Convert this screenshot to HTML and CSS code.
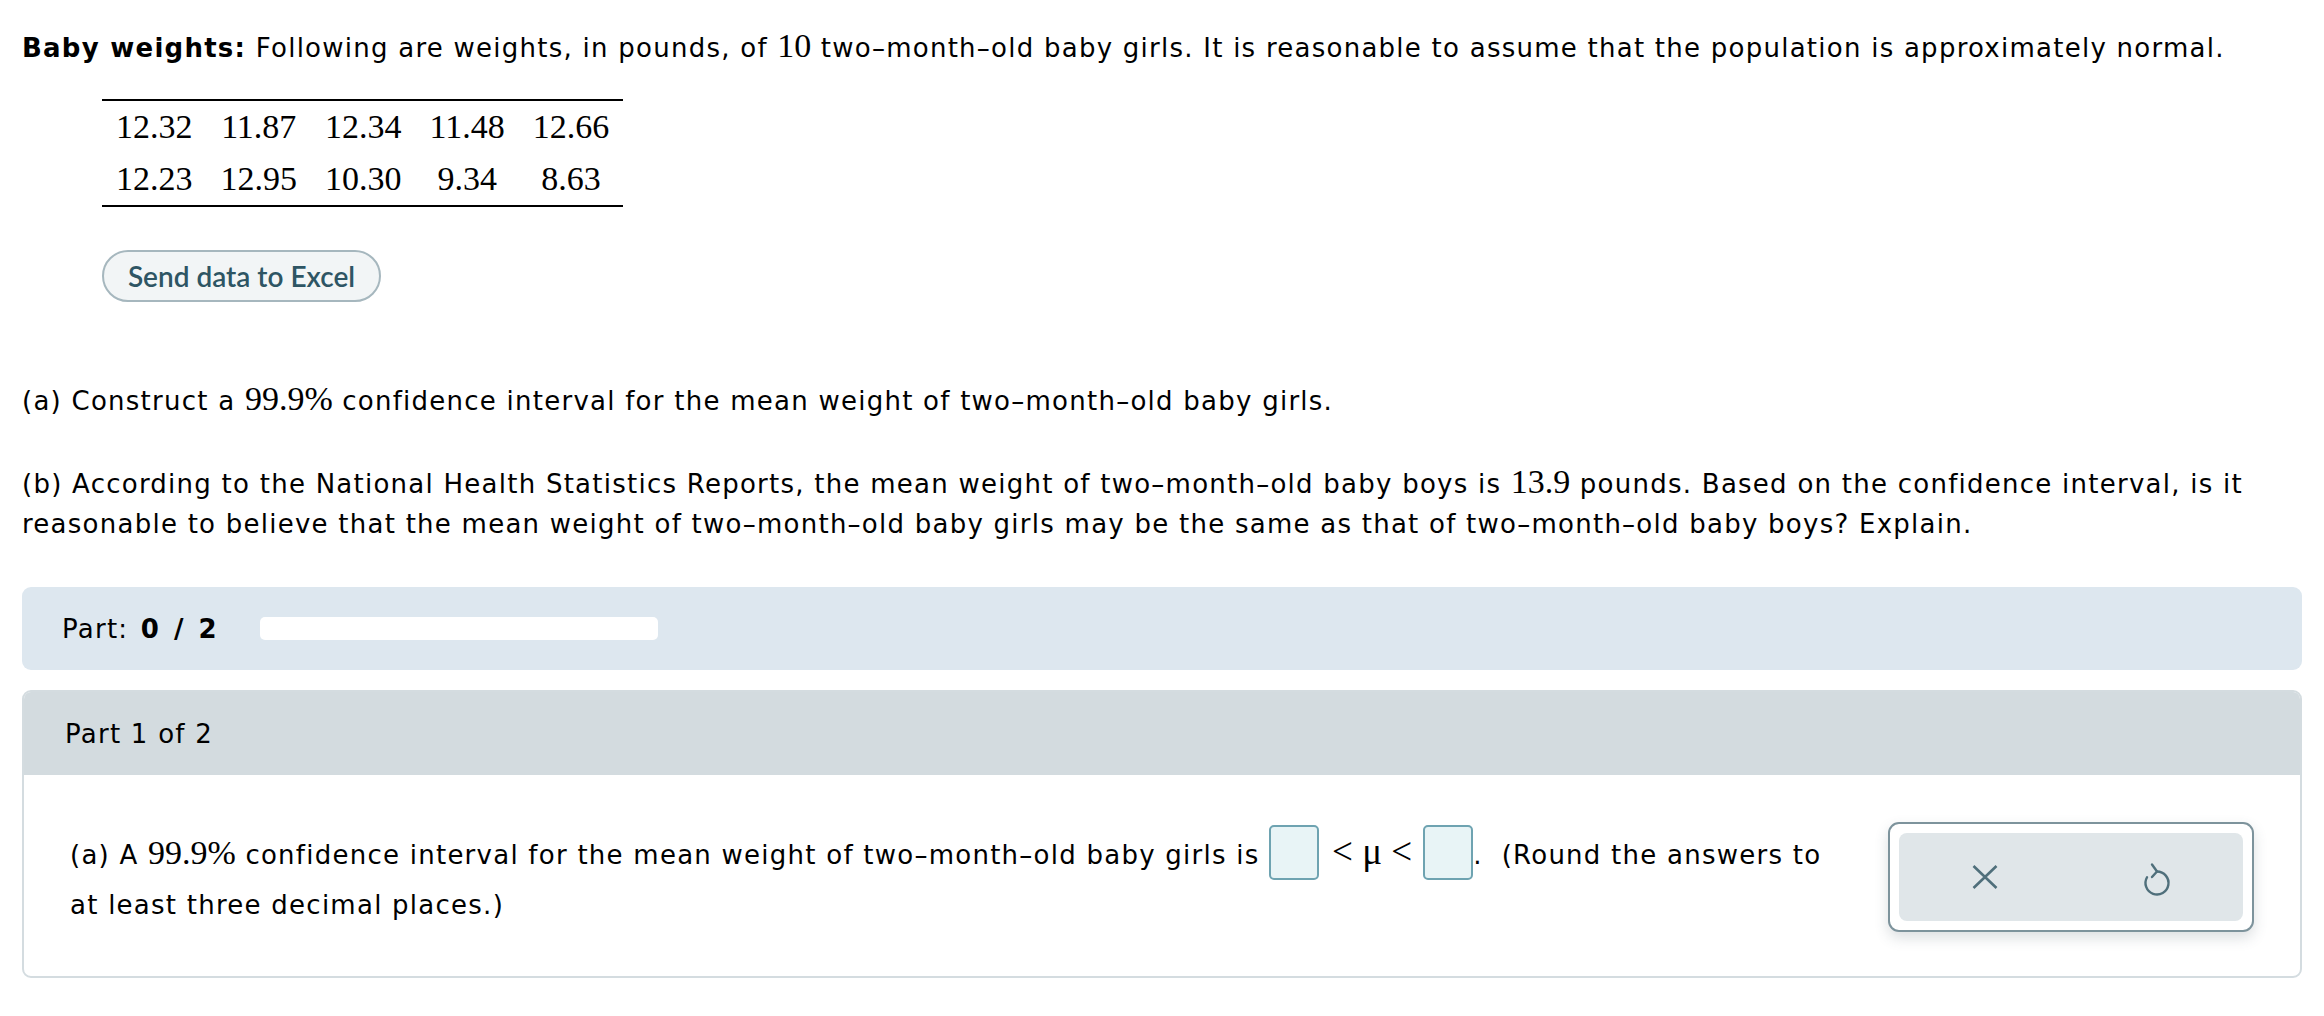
FILE: index.html
```html
<!DOCTYPE html>
<html lang="en">
<head>
<meta charset="utf-8">
<title>Baby weights</title>
<link rel="stylesheet" href="styles.css">
</head>
<body>
<main class="page">
  <p class="intro"><b>Baby weights:</b> Following are weights, in pounds, of <span class="m">10</span> two–month–old baby girls. It is reasonable to assume that the population is approximately normal.</p>

  <table class="data">
    <tr><td>12.32</td><td>11.87</td><td>12.34</td><td>11.48</td><td>12.66</td></tr>
    <tr><td>12.23</td><td>12.95</td><td>10.30</td><td>9.34</td><td>8.63</td></tr>
  </table>

  <button class="excel" type="button">Send data to Excel</button>

  <p class="qa">(a) Construct a <span class="m">99.9%</span> confidence interval for the mean weight of two–month–old baby girls.</p>

  <p class="qb">(b) According to the National Health Statistics Reports, the mean weight of two–month–old baby boys is <span class="m">13.9</span> pounds. Based on the confidence interval, is it reasonable to believe that the mean weight of two–month–old baby girls may be the same as that of two–month–old baby boys? Explain.</p>

  <div class="progress">
    <span class="progress-label">Part: <b>0 / 2</b></span>
    <div class="progress-bar"></div>
  </div>

  <section class="card">
    <div class="card-head">Part 1 of 2</div>
    <div class="card-body">
      <p class="answer">(a) A <span class="m">99.9%</span> confidence interval for the mean weight of two–month–old baby girls is <span class="box"></span><span class="m rel">&lt; μ &lt;</span><span class="box"></span>.&nbsp; (Round the answers to at least three decimal places.)</p>
      <div class="tools">
        <div class="tools-inner">
          <button class="tool" type="button" aria-label="Clear">
            <svg width="28" height="28" viewBox="0 0 28 28"><path d="M2.5 3 L25.5 25 M25.5 3 L2.5 25" stroke="#4f6f7b" stroke-width="2.6" fill="none"/></svg>
          </button>
          <button class="tool" type="button" aria-label="Undo">
            <svg width="30" height="40" viewBox="0 0 30 40"><path d="M15 14.5 A11.5 11.5 0 1 1 5.04 20.25" stroke="#4f6f7b" stroke-width="2.4" fill="none" stroke-linecap="round"/><path d="M10 7.5 L15 14.5 L10 20" stroke="#4f6f7b" stroke-width="2.4" fill="none" stroke-linecap="round" stroke-linejoin="round"/></svg>
          </button>
        </div>
      </div>
    </div>
  </section>
</main>
</body>
</html>
```

FILE: styles.css
```css
html, body {
  margin: 0;
  padding: 0;
  background: #ffffff;
}

.page {
  padding: 28px 22px 30px 22px;
  font-family: "DejaVu Sans", Verdana, sans-serif;
  font-size: 26px;
  letter-spacing: 1.25px;
  line-height: 40px;
  color: #000;
}

p {
  margin: 0;
}

.m {
  font-family: "Liberation Serif", "Times New Roman", serif;
  font-size: 34px;
  letter-spacing: 0;
  line-height: 1;
}

.m.rel {
  font-size: 37px;
  margin: 0 11px 0 13px;
}

.intro b {
  font-weight: 700;
}

.data {
  margin: 31px 0 0 80px;
  border-collapse: collapse;
  border-top: 2px solid #000;
  border-bottom: 2px solid #000;
  font-family: "Liberation Serif", "Times New Roman", serif;
  font-size: 34px;
  letter-spacing: 0;
}

.data td {
  height: 52px;
  padding: 0 14px;
  text-align: center;
  line-height: 52px;
}

.excel {
  display: block;
  margin: 43px 0 0 80px;
  width: 279px;
  height: 52px;
  border: 2px solid #a6b7be;
  border-radius: 26px;
  background: #f2f5f6;
  color: #2e5564;
  font-family: Lato, "Open Sans", sans-serif;
  font-weight: 600;
  font-size: 28px;
  letter-spacing: 0;
  padding: 0;
}

.qa {
  margin-top: 79px;
}

.qb {
  margin-top: 43px;
}

.progress {
  margin-top: 43px;
  height: 83px;
  background: #dde7ef;
  border-radius: 9px;
  display: flex;
  align-items: center;
  padding: 0 40px;
}

.progress-label b {
  font-weight: 700;
  letter-spacing: 3px;
  margin-left: 3px;
}

.progress-bar {
  margin-left: 40px;
  width: 398px;
  height: 23px;
  background: #fff;
  border-radius: 5px;
}

.card {
  margin-top: 20px;
  border: 2px solid #d4dce0;
  border-radius: 9px;
  overflow: hidden;
}

.card-head {
  height: 83px;
  background: #d3dbdf;
  display: flex;
  align-items: center;
  padding: 0 41px;
}

.card-body {
  display: flex;
  align-items: center;
  padding: 47px 46px 44px 46px;
}

.answer {
  flex: 1;
  line-height: 50px;
}

.box {
  display: inline-block;
  width: 46px;
  height: 51px;
  border: 2px solid #6ea3b1;
  border-radius: 5px;
  background: #e8f4f6;
  vertical-align: -16px;
}

.tools {
  margin-left: 40px;
  width: 366px;
  height: 110px;
  border: 2px solid #7d939c;
  border-radius: 11px;
  background: #fff;
  box-shadow: 0 6px 14px rgba(60, 80, 90, 0.18);
  padding: 9px 9px;
  box-sizing: border-box;
  flex: none;
}

.tools-inner {
  height: 100%;
  background: #e0e6e9;
  border-radius: 8px;
  display: flex;
  align-items: center;
  justify-content: space-around;
}

.tool {
  border: 0;
  background: none;
  padding: 0;
  display: flex;
  align-items: center;
  justify-content: center;
  width: 60px;
  height: 60px;
}
```
